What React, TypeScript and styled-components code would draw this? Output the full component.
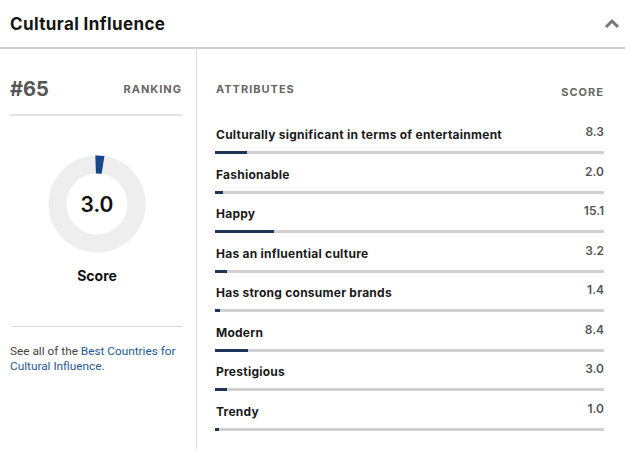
import React from "react";
import styled, { createGlobalStyle } from "styled-components";

const GlobalStyle = createGlobalStyle`
  body {
    margin: 0;
    background: #ffffff;
    font-family: "Inter", "Liberation Sans", sans-serif;
  }
`;

interface Attribute {
  label: string;
  score: number;
}

const ATTRIBUTES: Attribute[] = [
  { label: "Culturally significant in terms of entertainment", score: 8.3 },
  { label: "Fashionable", score: 2.0 },
  { label: "Happy", score: 15.1 },
  { label: "Has an influential culture", score: 3.2 },
  { label: "Has strong consumer brands", score: 1.4 },
  { label: "Modern", score: 8.4 },
  { label: "Prestigious", score: 3.0 },
  { label: "Trendy", score: 1.0 },
];

const SCORE = 3.0;

const Donut = ({ value }: { value: number }) => {
  const r = 39.5;
  const c = 2 * Math.PI * r;
  const filled = (value / 100) * c;
  return (
    <svg width="98" height="98" viewBox="0 0 98 98">
      <circle cx="49" cy="49" r={r} fill="none" stroke="#eeeeee" strokeWidth="18" />
      <circle
        cx="49"
        cy="49"
        r={r}
        fill="none"
        stroke="#17478a"
        strokeWidth="18"
        strokeDasharray={`${filled} ${c}`}
        transform="rotate(-92 49 49)"
      />
    </svg>
  );
};

const App = () => {
  return (
    <>
      <GlobalStyle />
      <Panel>
        <Header>
          <Title>Cultural Influence</Title>
          <svg width="16" height="12" viewBox="0 0 16 12">
            <polyline
              points="2,9 8,3 14,9"
              fill="none"
              stroke="#777777"
              strokeWidth="3"
            />
          </svg>
        </Header>
        <Body>
          <Side>
            <RankRow>
              <Rank>#65</Rank>
              <Caption>RANKING</Caption>
            </RankRow>
            <DonutBox>
              <Donut value={SCORE} />
              <DonutValue>{SCORE.toFixed(1)}</DonutValue>
            </DonutBox>
            <ScoreLabel>Score</ScoreLabel>
            <SeeAll>
              See all of the <a href="#">Best Countries for</a>{" "}
              <a href="#">Cultural Influence</a>.
            </SeeAll>
          </Side>
          <Main>
            <TableHead>
              <Caption>ATTRIBUTES</Caption>
              <Caption $low>SCORE</Caption>
            </TableHead>
            {ATTRIBUTES.map((item) => (
              <Row key={item.label}>
                <RowTop>
                  <RowLabel>{item.label}</RowLabel>
                  <RowScore>{item.score.toFixed(1)}</RowScore>
                </RowTop>
                <Track>
                  <Fill style={{ width: `${item.score}%` }} />
                </Track>
              </Row>
            ))}
          </Main>
        </Body>
      </Panel>
    </>
  );
};

export default App;

const Panel = styled.div`
  width: 625px;
  height: 449px;
  overflow: hidden;
`;

const Header = styled.div`
  height: 47px;
  padding: 0 5px 0 10px;
  display: flex;
  align-items: center;
  justify-content: space-between;
  border-bottom: 2px solid #cfcfcf;
`;

const Title = styled.h2`
  margin: 0;
  font-size: 17px;
  font-weight: 700;
  letter-spacing: 0.4px;
  color: #151515;
`;

const Body = styled.div`
  display: grid;
  grid-template-columns: 197px 1fr;
  height: 400px;
`;

const Side = styled.div`
  border-right: 1px solid #dddddd;
  padding: 0 14px 0 10px;
  display: flex;
  flex-direction: column;
`;

const RankRow = styled.div`
  display: flex;
  align-items: center;
  justify-content: space-between;
  padding: 27px 0 12px;
  border-bottom: 2px solid #e3e3e3;
`;

const Rank = styled.span`
  font-size: 20px;
  font-weight: 700;
  color: #555555;
  line-height: 26px;
`;

const Caption = styled.span<{ $low?: boolean }>`
  font-size: 11px;
  font-weight: 700;
  letter-spacing: 1px;
  color: #666666;
  margin-top: ${(p) => (p.$low ? "3px" : "0")};
`;

const DonutBox = styled.div`
  position: relative;
  align-self: center;
  width: 98px;
  height: 98px;
  margin: 39px 0 0 2px;
`;

const DonutValue = styled.span`
  position: absolute;
  inset: 0;
  display: flex;
  align-items: center;
  justify-content: center;
  font-size: 21px;
  font-weight: 600;
  color: #111111;
`;

const ScoreLabel = styled.div`
  text-align: center;
  margin: 14px 0 0 2px;
  font-size: 14px;
  font-weight: 700;
  color: #111111;
  padding-bottom: 42px;
  border-bottom: 1px solid #d6d6d6;
`;

const SeeAll = styled.p`
  margin: 17px 0 0;
  font-family: "Roboto", "Liberation Sans", sans-serif;
  font-size: 11.8px;
  line-height: 15px;
  color: #444444;

  a {
    color: #1f5a96;
    text-decoration: none;
  }
`;

const Main = styled.div`
  padding: 33px 21px 0 19px;
`;

const TableHead = styled.div`
  display: flex;
  justify-content: space-between;
  align-items: flex-start;
  margin-bottom: 28px;
`;

const Row = styled.div`
  height: 39.5px;
`;

const RowTop = styled.div`
  display: flex;
  justify-content: space-between;
  align-items: flex-start;
  height: 16px;
  margin-bottom: 8px;
`;

const RowLabel = styled.span`
  font-size: 12px;
  font-weight: 700;
  letter-spacing: 0.25px;
  color: #1a1a1a;
  line-height: 16px;
`;

const RowScore = styled.span`
  font-size: 12px;
  font-weight: 600;
  color: #555555;
  line-height: 10px;
`;

const Track = styled.div`
  height: 3px;
  background: #d0d0d0;
  margin-left: -1px;
`;

const Fill = styled.div`
  height: 100%;
  background: #1d3557;
`;
